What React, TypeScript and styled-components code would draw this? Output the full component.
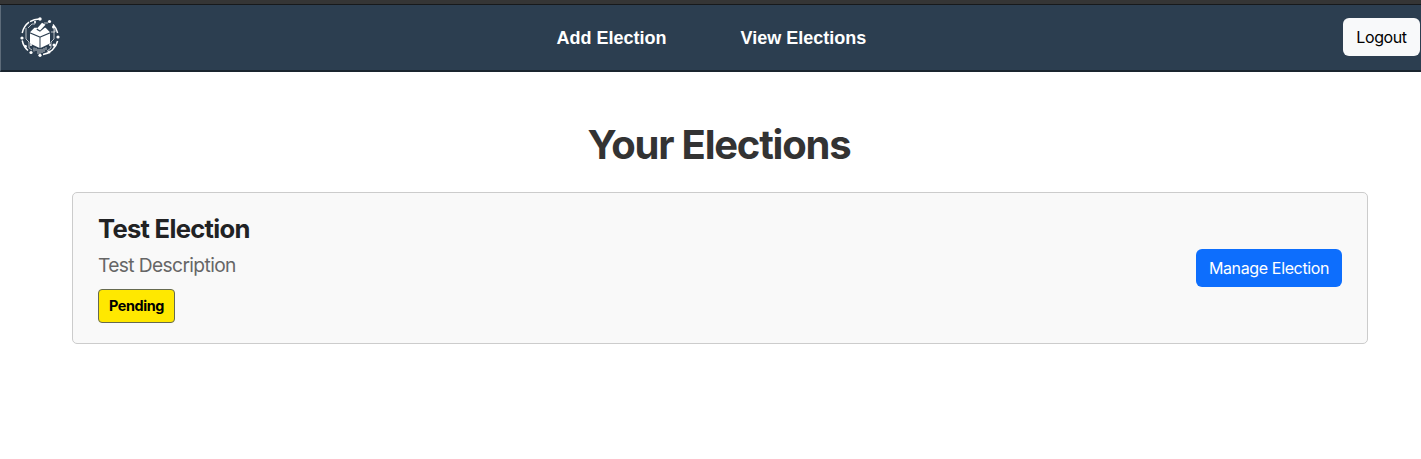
import React from "react";
import styled, { createGlobalStyle } from "styled-components";

const GlobalStyle = createGlobalStyle`
  * { box-sizing: border-box; }
  body { margin: 0; background: #fff; font-family: Inter, "Liberation Sans", sans-serif; color: #212529; }
  h1, h2, p { margin: 0; }
`;

const Page = styled.div`
  min-height: 459px;
  overflow: hidden;
`;

const TopStrip = styled.div`
  height: 5px;
  background: #353535;
  border-bottom: 1px solid #17191b;
`;

const Header = styled.header`
  height: 67px;
  display: grid;
  grid-template-columns: 1fr auto 1fr;
  align-items: center;
  background: #2c3e50;
  border-bottom: 2px solid #1a252f;
  border-left: 1px solid #5d6b79;
  padding: 0 1px 1px 18px;
`;

const LogoSvg = styled.svg`
  display: block;
  width: 42px;
  height: 42px;
`;

const Nav = styled.nav`
  display: flex;
  gap: 74px;
  margin-right: 16px;
  padding-top: 1px;
`;

const NavLink = styled.a<{ $width: number }>`
  width: ${(p) => p.$width}px;
  font: 700 18px/24px "Liberation Sans", Arial, sans-serif;
  color: #fff;
  white-space: nowrap;
`;

const Button = styled.button<{ $primary?: boolean }>`
  width: ${(p) => (p.$primary ? 146 : 77)}px;
  height: 38px;
  padding: 0;
  border: 0;
  border-radius: 6px;
  background: ${(p) => (p.$primary ? "#0d6efd" : "#f8f9fa")};
  color: ${(p) => (p.$primary ? "#fff" : "#000")};
  font: 400 16px/24px Inter, sans-serif;
  letter-spacing: ${(p) => (p.$primary ? "-0.36px" : "-0.4px")};
  white-space: nowrap;
`;

const LogoutButton = styled(Button)`
  justify-self: end;
`;

const Main = styled.main`
  padding: 49px 53px 0 72px;
`;

const Title = styled.h1`
  padding-right: 2px;
  font-size: 40px;
  line-height: 48px;
  font-weight: 700;
  letter-spacing: -1.22px;
  color: #333;
  text-align: center;
`;

const Card = styled.section`
  height: 152px;
  margin-top: 23px;
  padding: 0 25px;
  display: flex;
  align-items: center;
  justify-content: space-between;
  background: #f9f9f9;
  border: 1px solid #ccc;
  border-radius: 5px;
`;

const Details = styled.div`
  display: flex;
  flex-direction: column;
  align-items: flex-start;
`;

const Name = styled.h2`
  font-size: 25.6px;
  line-height: 30px;
  font-weight: 700;
  letter-spacing: -0.7px;
  color: #212224;
`;

const Description = styled.p`
  margin-top: 7px;
  font-size: 19.2px;
  line-height: 29px;
  letter-spacing: -0.62px;
  color: #666;
`;

const Status = styled.span`
  display: grid;
  place-items: center;
  width: 77px;
  height: 34px;
  margin-top: 9px;
  background: #ffe800;
  border: 1px solid #666a50;
  border-radius: 4px;
  color: #000;
  font-size: 14.4px;
  font-weight: 700;
  letter-spacing: -0.4px;
`;

function BallotLogo() {
  return (
    <LogoSvg viewBox="0 0 42 42" fill="none" stroke="#fff" aria-label="Ballot box logo">
      <g strokeWidth="1.5">
        <path d="M10 6.2A18 18 0 0 0 3.2 17M3.2 24.5A18 18 0 0 0 9 34.5M24 38.5A18 18 0 0 0 38.6 25M38.6 17A18 18 0 0 0 34 8.5M20 3A18 18 0 0 0 11 5.6" />
      </g>
      <g strokeWidth=".9" opacity=".75">
        <path d="M7 12v11l3 3v6l3 2M9 12l4-4h3V5M35 12v11l-3 3v6l-4 3M29 7h-4M32 16h4v-3M15 31.5v4M17 32v3M19 33v5M21 33v5M23 33v4M25 32v4M27 31v3" />
      </g>
      <g fill="#fff" stroke="none">
        <circle cx="21" cy="3" r="1.7" /><circle cx="30.5" cy="5.5" r="1.6" />
        <circle cx="34.5" cy="11" r="1.5" /><circle cx="39" cy="21" r="1.6" />
        <circle cx="35" cy="29" r="1.5" /><circle cx="30" cy="36" r="1.5" />
        <circle cx="21" cy="39.3" r="1.6" /><circle cx="12" cy="36.5" r="1.6" />
        <circle cx="6.5" cy="30.5" r="1.4" /><circle cx="3" cy="22" r="1.6" />
        <circle cx="12" cy="29" r="1" />
        <circle cx="31" cy="29" r="1" /><circle cx="16" cy="6" r="1" />
        <path d="M11 17.5 20.5 21.5v10.5L11 27.5ZM21.5 21.5l9.5-4v10l-9.5 4.5ZM11 16.3l4.4-4.5h3l-.9 1.9 3.5 2.1 4.7-4h.9l4.4 4.5-10 4.2Z" />
        <path d="m18 12.6 5-5.8 3.5 2-5.4 5.7Z" />
      </g>
    </LogoSvg>
  );
}

export default function App() {
  return (
    <Page>
      <GlobalStyle />
      <TopStrip />
      <Header>
        <BallotLogo />
        <Nav>
          <NavLink $width={110}>Add Election</NavLink>
          <NavLink $width={126}>View Elections</NavLink>
        </Nav>
        <LogoutButton>Logout</LogoutButton>
      </Header>
      <Main>
        <Title>Your Elections</Title>
        <Card>
          <Details>
            <Name>Test Election</Name>
            <Description>Test Description</Description>
            <Status>Pending</Status>
          </Details>
          <Button $primary>Manage Election</Button>
        </Card>
      </Main>
    </Page>
  );
}
